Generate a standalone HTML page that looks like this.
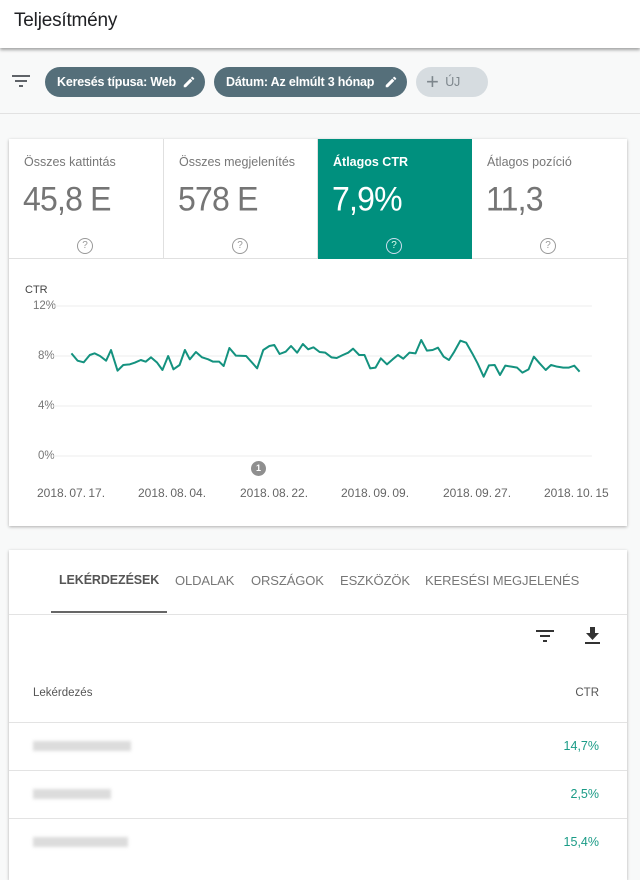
<!DOCTYPE html>
<html><head><meta charset="utf-8"><style>
*{margin:0;padding:0;box-sizing:border-box}
body{width:640px;height:862px;overflow:hidden;background:#f8f9f9;font-family:"Liberation Sans",sans-serif;position:relative;color:#212121}
.abs{position:absolute}
.hdr{left:0;top:0;width:640px;height:48px;background:#fff;box-shadow:0 2px 3px rgba(0,0,0,.35)}
.hdr span{position:absolute;left:14px;top:10px;font-size:19px;color:#202124;letter-spacing:-.2px}
.chip{height:30px;top:67px;border-radius:15px;background:#556f7a;color:#fff;font-size:12.5px;font-weight:bold;line-height:30px;padding-left:12px;letter-spacing:-.2px}
.chip svg{position:absolute;right:9px;top:8px}
.card{background:#fff;box-shadow:0 1px 3px rgba(0,0,0,.3)}
.tile{top:139px;height:120px;width:155px}
.tile .l{position:absolute;left:15px;top:16px;font-size:12.5px;color:#777}
.tile .v{position:absolute;left:14px;top:40px;font-size:32px;color:#757575;letter-spacing:-.8px;transform:scaleY(1.08);transform-origin:left top}
.tile .q{position:absolute;left:68px;top:99px;width:16px;height:16px;border:1px solid #999;border-radius:50%;font-size:10px;line-height:14px;text-align:center;color:#999}
.tab{top:573px;font-size:13px;color:#777;letter-spacing:-.1px}
.row{left:9px;width:618px;height:1px;background:#e3e3e3}
.blur{height:10px;background:#dcdcdc;filter:blur(1.5px)}
.pct{right:41px;font-size:12.5px;color:#1a9b86}
</style></head><body>
<div class="abs hdr"><span>Teljesítmény</span></div>
<svg class="abs" style="left:12px;top:73px" width="20" height="16"><rect x="0" y="2" width="18" height="2" fill="#5f6368"/><rect x="3" y="7" width="12" height="2" fill="#5f6368"/><rect x="7" y="12" width="4" height="2" fill="#5f6368"/></svg>
<div class="abs chip" style="left:45px;width:160px">Keresés típusa: Web<svg width="14" height="14" viewBox="0 0 24 24"><path d="M3 17.25V21h3.75L17.8 9.94l-3.75-3.75L3 17.25zM20.7 7.04a1 1 0 000-1.41l-2.34-2.34a1 1 0 00-1.41 0l-1.83 1.83 3.75 3.75 1.83-1.83z" fill="#fff"/></svg></div>
<div class="abs chip" style="left:214px;width:193px">Dátum: Az elmúlt 3 hónap<svg width="14" height="14" viewBox="0 0 24 24"><path d="M3 17.25V21h3.75L17.8 9.94l-3.75-3.75L3 17.25zM20.7 7.04a1 1 0 000-1.41l-2.34-2.34a1 1 0 00-1.41 0l-1.83 1.83 3.75 3.75 1.83-1.83z" fill="#fff"/></svg></div>
<div class="abs chip" style="left:416px;width:72px;background:#d6dce0;color:#7d868c;font-weight:normal;padding-left:10px"><span style="font-size:22px;vertical-align:-3px;font-weight:300">+</span>&nbsp;&nbsp;ÚJ</div>
<div class="abs" style="left:0;top:113px;width:640px;height:1px;background:#e2e2e2"></div>

<div class="abs card" style="left:9px;top:139px;width:618px;height:387px"></div>
<div class="abs tile" style="left:9px;border-right:1px solid #e0e0e0;border-bottom:1px solid #e0e0e0"><div class="l">Összes kattintás</div><div class="v">45,8 E</div><div class="q">?</div></div>
<div class="abs tile" style="left:164px;border-right:1px solid #e0e0e0;border-bottom:1px solid #e0e0e0;width:154px"><div class="l">Összes megjelenítés</div><div class="v">578 E</div><div class="q">?</div></div>
<div class="abs tile" style="left:318px;width:154px;background:#00907e"><div class="l" style="color:#fff;font-weight:bold">Átlagos CTR</div><div class="v" style="color:#fff">7,9%</div><div class="q" style="border-color:#cde;color:#dfe">?</div></div>
<div class="abs tile" style="left:472px;border-bottom:1px solid #e0e0e0"><div class="l">Átlagos pozíció</div><div class="v">11,3</div><div class="q">?</div></div>

<div class="abs" style="left:25px;top:284px;font-size:11px;color:#444">CTR</div>
<div class="abs" style="left:33px;top:300px;font-size:11.5px;color:#777">12%</div>
<div class="abs" style="left:38px;top:350px;font-size:11.5px;color:#777">8%</div>
<div class="abs" style="left:38px;top:400px;font-size:11.5px;color:#777">4%</div>
<div class="abs" style="left:38px;top:450px;font-size:11.5px;color:#777">0%</div>
<svg class="abs" style="left:0;top:270px" width="640" height="260" viewBox="0 0 1568 780" preserveAspectRatio="none">
<g stroke="#ececec" stroke-width="1"><line x1="130" y1="108" x2="1450" y2="108" vector-effect="non-scaling-stroke"/><line x1="130" y1="258" x2="1450" y2="258" vector-effect="non-scaling-stroke"/><line x1="130" y1="408" x2="1450" y2="408" vector-effect="non-scaling-stroke"/><line x1="130" y1="558" x2="1450" y2="558" vector-effect="non-scaling-stroke"/></g>
<polyline fill="none" stroke="#14927f" stroke-width="2" vector-effect="non-scaling-stroke" stroke-linejoin="round" points="175,250 190,272 205,277 220,255 232,250 245,258 260,272 272,240 288,302 302,285 318,283 330,278 345,270 357,275 370,262 385,278 398,300 412,258 425,298 440,285 453,240 465,268 480,246 495,262 510,268 522,275 537,275 548,288 562,234 578,257 603,258 630,295 645,240 660,228 672,225 685,252 700,245 713,228 728,248 742,222 755,238 768,232 783,246 797,248 812,262 825,264 840,255 853,248 865,236 880,255 893,255 907,295 920,293 933,265 948,283 962,268 975,255 988,266 1003,248 1018,250 1032,210 1046,242 1060,240 1073,233 1087,260 1100,270 1113,245 1128,212 1142,218 1157,250 1170,280 1185,320 1198,286 1212,285 1225,315 1238,287 1253,290 1267,293 1280,308 1295,298 1308,260 1322,280 1337,300 1350,285 1365,290 1380,293 1393,293 1407,287 1420,305"/>
</svg>
<div class="abs" style="left:251px;top:461px;width:15px;height:15px;border-radius:50%;background:#8f8f8f;color:#fff;font-size:9px;font-weight:bold;text-align:center;line-height:15px">1</div>
<div class="abs" style="left:37px;top:486px;font-size:12px;color:#666;word-spacing:-1px">2018. 07. 17.</div>
<div class="abs" style="left:138px;top:486px;font-size:12px;color:#666;word-spacing:-1px">2018. 08. 04.</div>
<div class="abs" style="left:240px;top:486px;font-size:12px;color:#666;word-spacing:-1px">2018. 08. 22.</div>
<div class="abs" style="left:341px;top:486px;font-size:12px;color:#666;word-spacing:-1px">2018. 09. 09.</div>
<div class="abs" style="left:443px;top:486px;font-size:12px;color:#666;word-spacing:-1px">2018. 09. 27.</div>
<div class="abs" style="left:544px;top:486px;font-size:12px;color:#666;word-spacing:-1px">2018. 10. 15</div>

<div class="abs card" style="left:9px;top:550px;width:618px;height:330px"></div>
<div class="abs tab" style="left:59px;color:#555;font-weight:bold;font-size:12.5px">LEKÉRDEZÉSEK</div>
<div class="abs tab" style="left:175px">OLDALAK</div>
<div class="abs tab" style="left:251px">ORSZÁGOK</div>
<div class="abs tab" style="left:340px">ESZKÖZÖK</div>
<div class="abs tab" style="left:425px">KERESÉSI MEGJELENÉS</div>
<div class="abs" style="left:51px;top:611px;width:116px;height:2px;background:#666"></div>
<div class="abs row" style="top:614px"></div>
<svg class="abs" style="left:536px;top:629px" width="18" height="14"><rect x="0" y="1" width="18" height="2" fill="#333"/><rect x="4" y="6" width="10" height="2" fill="#333"/><rect x="7" y="11" width="4" height="2" fill="#333"/></svg>
<svg class="abs" style="left:584px;top:627px" width="18" height="20"><path d="M6 0h5v6h4l-6.5 7L2 6h4z" fill="#333"/><rect x="1" y="15" width="15" height="2" fill="#333"/></svg>
<div class="abs" style="left:33px;top:687px;font-size:11.5px;color:#555">Lekérdezés</div>
<div class="abs" style="right:41px;top:687px;font-size:11.5px;color:#555">CTR</div>
<div class="abs row" style="top:722px"></div>
<div class="abs row" style="top:770px"></div>
<div class="abs row" style="top:818px"></div>
<div class="abs blur" style="left:33px;top:741px;width:98px"></div>
<div class="abs blur" style="left:33px;top:789px;width:78px"></div>
<div class="abs blur" style="left:33px;top:837px;width:95px"></div>
<div class="abs pct" style="top:739px">14,7%</div>
<div class="abs pct" style="top:787px">2,5%</div>
<div class="abs pct" style="top:835px">15,4%</div>
</body></html>
